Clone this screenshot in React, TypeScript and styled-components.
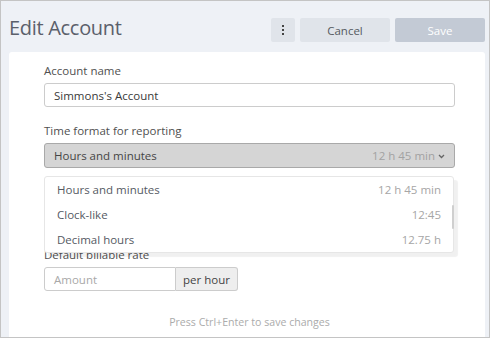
import React from "react";
import styled, { createGlobalStyle } from "styled-components";

const Global = createGlobalStyle`
  html, body { margin: 0; padding: 0; }
  body { font-family: "Open Sans", "Noto Sans", sans-serif; }
  * { box-sizing: border-box; }
`;

const Frame = styled.div`
  width: 490px;
  height: 338px;
  border: 1px solid #c4c4c4;
  background: #eef1f6;
  display: flex;
  flex-direction: column;
  overflow: hidden;
`;

const Header = styled.div`
  height: 51px;
  flex: none;
  display: flex;
  align-items: flex-start;
  padding: 17px 4px 0 8px;
`;

const Title = styled.h1`
  margin: -2px 0 0 0;
  flex: 1;
  font-size: 20px;
  line-height: 24px;
  font-weight: 400;
  color: #5b606b;
  letter-spacing: -0.3px;
`;

const Button = styled.button<{ $variant?: "plain" | "primary"; $w: number }>`
  width: ${(p) => p.$w}px;
  height: 24px;
  margin-left: 5px;
  border: none;
  border-radius: 2px;
  font-family: inherit;
  font-size: 11.5px;
  padding: 0;
  display: flex;
  align-items: center;
  justify-content: center;
  background: ${(p) => (p.$variant === "primary" ? "#c3cad5" : "#e0e4ea")};
  color: ${(p) => (p.$variant === "primary" ? "#ffffff" : "#555a60")};
`;

const Panel = styled.div`
  flex: 1;
  margin: 0 4px 0 8px;
  background: #ffffff;
  border-radius: 3px 3px 0 0;
  position: relative;
  padding: 11px 30px 0 35px;
  display: flex;
  flex-direction: column;
`;

const Field = styled.div<{ $gap?: number }>`
  display: flex;
  flex-direction: column;
  margin-bottom: ${(p) => p.$gap ?? 16}px;
`;

const Label = styled.label`
  font-size: 11.5px;
  line-height: 16px;
  color: #505050;
  margin-bottom: 4px;
`;

const TextInput = styled.div<{ $placeholder?: boolean }>`
  height: 24px;
  border: 1px solid #cccccc;
  border-radius: 3px;
  padding: 0 9px;
  display: flex;
  align-items: center;
  font-size: 11.5px;
  color: ${(p) => (p.$placeholder ? "#a8a8a8" : "#3a3a3a")};
`;

const Select = styled.div`
  height: 25px;
  border: 1px solid #a9a9a9;
  border-radius: 3px;
  background: #d5d5d5;
  padding: 0 9px;
  display: flex;
  align-items: center;
  font-size: 11.5px;
  color: #454545;
`;

const SelectText = styled.span`
  flex: 1;
`;

const Hint = styled.span`
  color: #a2a2a2;
`;

const Chevron = styled.svg`
  margin-left: 3px;
  margin-top: 1px;
`;

const InputGroup = styled.div`
  display: flex;
  width: 194px;
`;

const AmountInput = styled(TextInput)`
  width: 132px;
  border-radius: 3px 0 0 3px;
`;

const Addon = styled.div`
  flex: 1;
  height: 24px;
  border: 1px solid #cccccc;
  border-left: none;
  border-radius: 0 3px 3px 0;
  background: #eeeeee;
  display: flex;
  align-items: center;
  justify-content: center;
  font-size: 11.5px;
  color: #444444;
`;

const Footer = styled.div`
  margin-top: 8px;
  text-align: center;
  font-size: 10.6px;
  color: #ababab;
`;

const Menu = styled.div`
  position: absolute;
  left: 35px;
  top: 124px;
  width: 410px;
  background: #ffffff;
  border: 1px solid #e6e6e6;
  border-radius: 3px;
  box-shadow: 4px 4px 1px rgba(0, 0, 0, 0.06);
  padding: 0;
`;

const MenuItem = styled.div`
  height: 25px;
  display: flex;
  align-items: center;
  padding: 0 12px 0 12px;
  font-size: 11.5px;
  color: #555a63;
`;

const MenuLabel = styled.span`
  flex: 1;
`;

const MenuValue = styled.span`
  color: #a6a6a6;
`;

const Scrollbar = styled.div`
  position: absolute;
  right: -1px;
  top: 28px;
  width: 2px;
  height: 24px;
  background: #cfcfcf;
  border-radius: 1px;
`;

const Dots = () => (
  <svg width="4" height="10" viewBox="0 0 4 10">
    <rect x="1" y="0" width="2" height="2" fill="#444" />
    <rect x="1" y="4" width="2" height="2" fill="#444" />
    <rect x="1" y="8" width="2" height="2" fill="#444" />
  </svg>
);

const options = [
  { label: "Hours and minutes", value: "12 h 45 min" },
  { label: "Clock-like", value: "12:45" },
  { label: "Decimal hours", value: "12.75 h" },
];

export default function App() {
  return (
    <>
      <Global />
      <Frame>
        <Header>
          <Title>Edit Account</Title>
          <Button $w={24}>
            <Dots />
          </Button>
          <Button $w={90}>Cancel</Button>
          <Button $w={90} $variant="primary">
            Save
          </Button>
        </Header>
        <Panel>
          <Field>
            <Label>Account name</Label>
            <TextInput>Simmons's Account</TextInput>
          </Field>
          <Field $gap={79}>
            <Label>Time format for reporting</Label>
            <Select>
              <SelectText>Hours and minutes</SelectText>
              <Hint>12 h 45 min</Hint>
              <Chevron width="7" height="5" viewBox="0 0 7 5">
                <path d="M1 1 L3.5 3.5 L6 1" fill="none" stroke="#666" strokeWidth="1.3" />
              </Chevron>
            </Select>
          </Field>
          <Field>
            <Label>Default billable rate</Label>
            <InputGroup>
              <AmountInput $placeholder>Amount</AmountInput>
              <Addon>per hour</Addon>
            </InputGroup>
          </Field>
          <Footer>Press Ctrl+Enter to save changes</Footer>
          <Menu>
            {options.map((o) => (
              <MenuItem key={o.label}>
                <MenuLabel>{o.label}</MenuLabel>
                <MenuValue>{o.value}</MenuValue>
              </MenuItem>
            ))}
            <Scrollbar />
          </Menu>
        </Panel>
      </Frame>
    </>
  );
}
